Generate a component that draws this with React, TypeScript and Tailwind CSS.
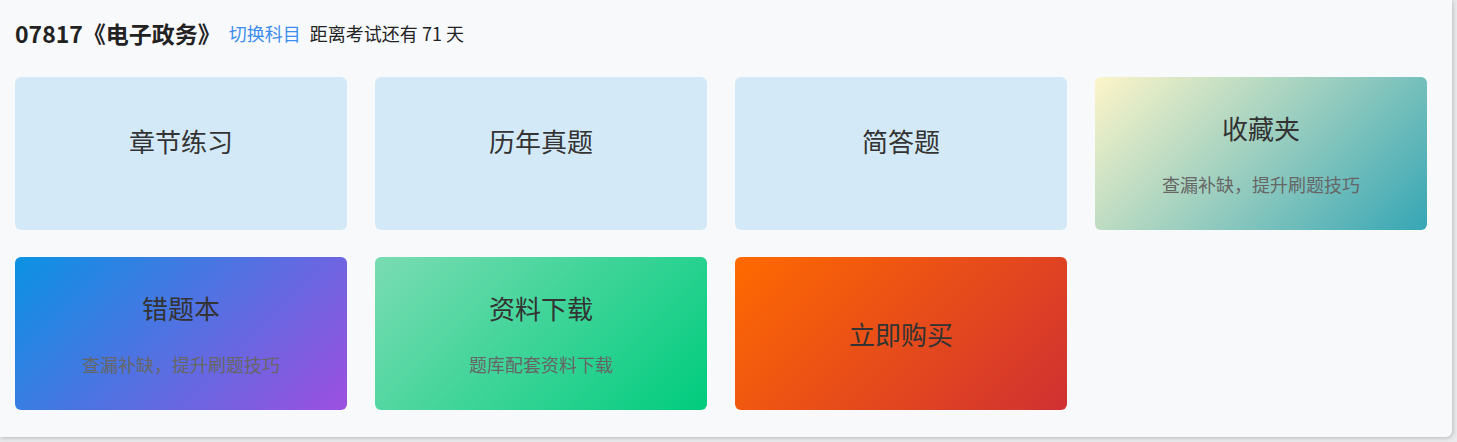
const font = { fontFamily: '"Noto Sans CJK SC", "Noto Sans", sans-serif' };

type Card = {
  title: string;
  sub?: string;
  bg: string;
  raised?: boolean;
};

const cards: Card[] = [
  { title: '章节练习', bg: 'bg-[#d3e9f7]', raised: true },
  { title: '历年真题', bg: 'bg-[#d3e9f7]', raised: true },
  { title: '简答题', bg: 'bg-[#d3e9f7]', raised: true },
  {
    title: '收藏夹',
    sub: '查漏补缺，提升刷题技巧',
    bg: 'bg-[linear-gradient(135deg,#fdf5c9,#36a6b5)]',
  },
  {
    title: '错题本',
    sub: '查漏补缺，提升刷题技巧',
    bg: 'bg-[linear-gradient(135deg,#0a92e3,#9d4fe0)]',
  },
  {
    title: '资料下载',
    sub: '题库配套资料下载',
    bg: 'bg-[linear-gradient(135deg,#7adcb2,#00cc7e)]',
  },
  { title: '立即购买', bg: 'bg-[linear-gradient(135deg,#ff6a00,#d03032)]' },
];

const App = () => {
  return (
    <div className="w-[1457px] h-[442px] bg-[#e9eaec]" style={font}>
      <div className="w-[1452px] h-[437px] bg-[#f8f9fb] rounded-br-[6px] shadow-[1px_1px_4px_rgba(0,0,0,0.2)] pl-[15px] pr-[25px] pt-[18px]">
        <div className="flex items-center h-[30px]">
          <span className="text-[23px] font-bold text-[#222]">07817《电子政务》</span>
          <span className="ml-[8px] text-[18px] text-[#3d8df0]">切换科目</span>
          <span className="ml-[9px] text-[18px] text-[#222]">距离考试还有 71 天</span>
        </div>

        <div className="grid grid-cols-4 gap-x-[28px] gap-y-[27px] mt-[29px]">
          {cards.map((c) => (
            <div
              key={c.title}
              className={`h-[153px] rounded-[6px] flex flex-col items-center ${c.raised ? 'justify-start pt-[47px]' : 'justify-center'} ${c.bg}`}
            >
              <div className="text-[26px] leading-[34px] text-[#333]">{c.title}</div>
              {c.sub && (
                <div className="mt-[27px] text-[18px] leading-[24px] text-[#666]">{c.sub}</div>
              )}
            </div>
          ))}
        </div>
      </div>
    </div>
  );
};

export default App;
